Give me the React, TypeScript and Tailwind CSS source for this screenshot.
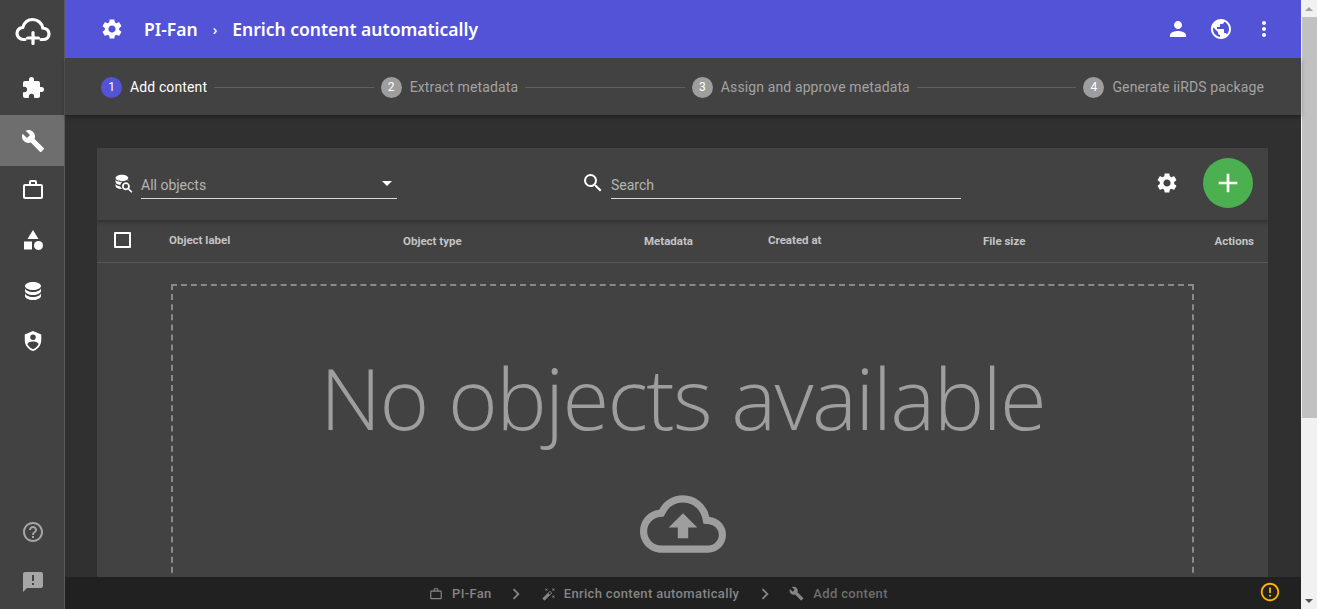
import {
  MdSettings,
  MdExtension,
  MdBuild,
  MdOutlineWorkOutline,
  MdCategory,
  MdPerson,
  MdPublic,
  MdMoreVert,
  MdSearch,
  MdAdd,
  MdArrowDropDown,
  MdHelpOutline,
  MdAnnouncement,
  MdOutlineCloudUpload,
  MdAutoFixHigh,
  MdChevronRight,
  MdErrorOutline,
} from 'react-icons/md';

function CloudPlusIcon({ className }: { className?: string }) {
  return (
    <svg viewBox="0 0 36 28" className={className} fill="none" stroke="currentColor" strokeWidth="3.2" strokeLinecap="round">
      <path d="M10 22.5H8.5C4.5 22.500 2 19.500 2 16.500C2 13 4.500 10.700 7.800 10.300C9.300 5.500 13 2.500 17.500 2.500C23 2.500 27 6.300 27.800 11C31.300 11.300 34 13.500 34 17C34 20.300 31.500 22.500 28 22.500H26" />
      <path d="M18 15.500V26.500M12.500 21H23.500" />
    </svg>
  );
}

function DatabaseIcon({ className }: { className?: string }) {
  return (
    <svg viewBox="0 0 24 24" className={className} fill="currentColor">
      <path d="M12,3C7.58,3 4,4.79 4,7C4,9.21 7.58,11 12,11C16.42,11 20,9.21 20,7C20,4.79 16.42,3 12,3M4,9V12C4,14.21 7.58,16 12,16C16.42,16 20,14.21 20,12V9C20,11.21 16.42,13 12,13C7.58,13 4,11.21 4,9M4,14V17C4,19.21 7.58,21 12,21C16.42,21 20,19.21 20,17V14C20,16.21 16.42,18 12,18C7.58,18 4,16.21 4,14Z" />
    </svg>
  );
}

function ShieldAccountIcon({ className }: { className?: string }) {
  return (
    <svg viewBox="0 0 24 24" className={className} fill="currentColor">
      <path d="M12,1L3,5V11C3,16.55 6.84,21.74 12,23C17.16,21.74 21,16.55 21,11V5L12,1M12,5A3,3 0 0,1 15,8A3,3 0 0,1 12,11A3,3 0 0,1 9,8A3,3 0 0,1 12,5M17.13,17C15.92,18.85 14.11,20.24 12,20.92C9.89,20.24 8.08,18.85 6.87,17C6.53,16.5 6.24,16 6,15.47C6,13.82 8.71,12.47 12,12.47C15.29,12.47 18,13.79 18,15.47C17.76,16 17.47,16.5 17.13,17Z" />
    </svg>
  );
}

function DatabaseSearchIcon({ className }: { className?: string }) {
  return (
    <svg viewBox="0 0 24 24" className={className} fill="currentColor">
      <path d="M10 1C5.600 1 2 2.800 2 5C2 7.200 5.600 9 10 9C14.400 9 18 7.200 18 5C18 2.800 14.400 1 10 1ZM2 7V10C2 11.800 4.500 13.400 8 13.800C8.300 12.300 9.200 11 10.400 10.100C5.800 10.100 2 8.900 2 7ZM18 7C18 7.700 17.600 8.300 17 8.900C17.700 9 18 9.100 18 9.200ZM2 12V15C2 17 5 18.700 9 19C9.200 19 9.600 19 10 19C9 18 8.300 16.900 8 15.700C4.500 15.400 2 14 2 12Z" />
      <path fillRule="evenodd" d="M15 10.500A5 5 0 0 1 19.200 18.200L23.300 22.300L21.800 23.800L17.700 19.700A5 5 0 1 1 15 10.500ZM15 12.700A2.800 2.800 0 1 0 15 18.300A2.800 2.800 0 1 0 15 12.700Z" />
    </svg>
  );
}

const navItems = [
  { icon: <MdExtension size={24} />, rowClass: 'h-[51px] pb-[3px]' },
  { icon: <MdBuild size={24} />, rowClass: 'h-[51px] bg-[#6e6e6e]' },
  { icon: <MdOutlineWorkOutline size={24} />, rowClass: 'h-[50px] pb-[3px]' },
  { icon: <MdCategory size={24} />, rowClass: 'h-[50px] pb-[2px]' },
  { icon: <DatabaseIcon className="w-6 h-6" />, rowClass: 'h-[50px] pb-[1px]' },
  { icon: <ShieldAccountIcon className="w-[22px] h-[22px]" />, rowClass: 'h-[50px] pb-[1px]' },
];

function Sidebar() {
  return (
    <aside className="w-[65px] shrink-0 h-full bg-[#424242] border-r border-[#5a5a5a] flex flex-col items-stretch text-white">
      <div className="h-[64px] flex items-center justify-center pb-[2px] pl-px">
        <CloudPlusIcon className="w-[36px] h-[28px]" />
      </div>
      {navItems.map((item, i) => (
        <div key={i} className={`flex items-center justify-center pl-px ${item.rowClass}`}>
          {item.icon}
        </div>
      ))}
      <div className="mt-auto flex flex-col items-center text-[#a6a6a6] pb-[2px] pl-px">
        <div className="h-[50px] flex items-center justify-center">
          <MdHelpOutline size={24} />
        </div>
        <div className="h-[50px] flex items-center justify-center">
          <MdAnnouncement size={24} />
        </div>
      </div>
    </aside>
  );
}

function TopBar() {
  return (
    <header className="h-[58px] shrink-0 bg-[#5353d8] text-white flex items-center pl-[35px] pr-[25px] relative z-20 font-['Noto_Sans',sans-serif]">
      <MdSettings size={24} />
      <span className="ml-[20px] text-[17.5px] font-semibold">PI-Fan</span>
      <span className="ml-[15px] text-[14px] font-medium">›</span>
      <span className="ml-[15px] text-[17.5px] font-semibold">Enrich content automatically</span>
      <div className="ml-auto flex items-center gap-[19px]">
        <MdPerson size={24} />
        <MdPublic size={24} />
        <MdMoreVert size={24} />
      </div>
    </header>
  );
}

function Step({ n, label, active }: { n: number; label: string; active?: boolean }) {
  return (
    <div className="flex items-center shrink-0">
      <div className={`w-[21px] h-[21px] rounded-full flex items-center justify-center text-[12px] text-white ${active ? 'bg-[#5353d8]' : 'bg-[#9e9e9e]'}`}>
        {n}
      </div>
      <span className={`ml-[8px] text-[14px] tracking-[0.12px] ${active ? 'text-white' : 'text-[#a3a3a3]'}`}>{label}</span>
    </div>
  );
}

function Stepper() {
  const line = <div className="flex-1 h-px mx-[7px] bg-[#5f5f5f]" />;
  return (
    <div className="h-[57px] shrink-0 bg-[#424242] shadow-[0_2px_4px_rgba(0,0,0,0.35)] relative z-10 flex items-center pt-px pl-[36px] pr-[37px] font-['Roboto',sans-serif]">
      <Step n={1} label="Add content" active />
      {line}
      <Step n={2} label="Extract metadata" />
      {line}
      <Step n={3} label="Assign and approve metadata" />
      {line}
      <Step n={4} label="Generate iiRDS package" />
    </div>
  );
}

const columns = [
  { label: 'Object label', className: 'left-[72px] top-[12px]' },
  { label: 'Object type', className: 'left-[306px] top-[13px]' },
  { label: 'Metadata', className: 'left-[547px] top-[13px]' },
  { label: 'Created at', className: 'left-[671px] top-[12px]' },
  { label: 'File size', className: 'left-[886px] top-[13px]' },
  { label: 'Actions', className: 'right-[14px] top-[13px]' },
];

function ObjectsCard() {
  return (
    <section className="bg-[#424242] h-[480px] overflow-hidden font-['Roboto',sans-serif]">
      <div className="h-[72px] flex items-center pb-[2px] pl-[17px] pr-[15px] shadow-[0_2px_4px_rgba(0,0,0,0.3)] relative z-10">
        <DatabaseSearchIcon className="w-[19px] h-[19px] text-white" />
        <div className="ml-[8px] w-[256px] h-[31px] mt-px border-b border-[#d9d9d9] flex items-center justify-between">
          <span className="text-[14px] text-[#b5b5b5] pt-[4px]">All objects</span>
          <MdArrowDropDown size={24} className="text-white mr-[-2px]" />
        </div>
        <MdSearch size={24} className="ml-[184px] text-white" />
        <div className="ml-[6px] w-[350px] h-[31px] mt-px border-b border-[#d9d9d9] flex items-center">
          <span className="text-[14px] text-[#b5b5b5] pt-[4px]">Search</span>
        </div>
        <MdSettings size={24} className="ml-auto text-white" />
        <button className="ml-[24px] w-[50px] h-[50px] rounded-full bg-[#4caf50] text-white flex items-center justify-center">
          <MdAdd size={32} />
        </button>
      </div>
      <div className="h-[43px] border-b border-[#565656] relative">
        <div className="absolute left-[17px] top-[12px] w-[17px] h-[16px] border-2 border-white rounded-[1px]" />
        {columns.map(c => (
          <span key={c.label} className={`absolute ${c.className} text-[11.5px] font-bold text-[#c4c4c4]`}>
            {c.label}
          </span>
        ))}
      </div>
      <div className="pt-[21px] pl-[74px] pr-[74px]">
        <div className="h-[400px] border-2 border-dashed border-[#8a8a8a] flex flex-col items-center text-[#9e9e9e]">
          <div className="mt-[56px] text-[85px] leading-[110px] font-light font-['Open_Sans',sans-serif] tracking-[-1.7px]">
            No objects available
          </div>
          <MdOutlineCloudUpload size={86} className="mt-[29px]" />
        </div>
      </div>
    </section>
  );
}

function BottomBar() {
  return (
    <footer className="h-[32px] shrink-0 bg-[#212121] relative z-10 flex items-center pt-px pl-[364px] text-[#858585] text-[13px] font-medium tracking-[0.35px] font-['Roboto',sans-serif]">
      <MdOutlineWorkOutline size={14} />
      <span className="ml-[9px]">PI-Fan</span>
      <MdChevronRight size={22} className="ml-[13px]" />
      <MdAutoFixHigh size={14} className="ml-[15px]" />
      <span className="ml-[8px]">Enrich content automatically</span>
      <MdChevronRight size={22} className="ml-[15px]" />
      <MdBuild size={15} className="ml-[13px]" />
      <span className="ml-[9px] text-[#6e6e6e]">Add content</span>
      <MdErrorOutline size={22} className="absolute right-[20px] top-[4px] text-[#ffb300]" />
    </footer>
  );
}

function FakeScrollbar() {
  return (
    <div className="w-[16px] h-full shrink-0 bg-[#f1f1f1] flex flex-col items-center">
      <div className="h-[17px] w-full flex items-center justify-center">
        <div className="w-0 h-0 border-x-[4px] border-x-transparent border-b-[4px] border-b-[#a3a3a3]" />
      </div>
      <div className="h-[401px] w-[15px] ml-px bg-[#c1c1c1]" />
      <div className="mt-auto h-[17px] w-full flex items-center justify-center">
        <div className="w-0 h-0 border-x-[4px] border-x-transparent border-t-[4px] border-t-[#505050]" />
      </div>
    </div>
  );
}

export default function App() {
  return (
    <div className="w-[1317px] h-[609px] overflow-hidden flex bg-[#303030]">
      <Sidebar />
      <div className="flex-1 min-w-0 h-full flex flex-col">
        <TopBar />
        <Stepper />
        <main className="flex-1 min-h-0 overflow-hidden pt-[33px] pl-[32px] pr-[33px]">
          <ObjectsCard />
        </main>
        <BottomBar />
      </div>
      <FakeScrollbar />
    </div>
  );
}
